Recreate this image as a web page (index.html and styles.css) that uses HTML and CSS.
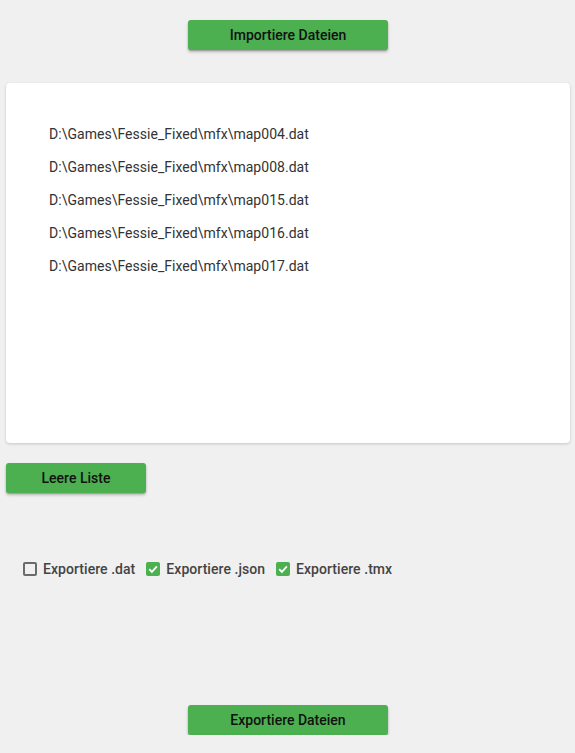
FILE: index.html
```html
<!DOCTYPE html>
<html lang="de">
<head>
<meta charset="utf-8">
<title>Fessie Map Converter</title>
<link rel="stylesheet" href="styles.css">
</head>
<body>
<div class="page">
  <div class="center-row top">
    <button class="btn btn-wide">Importiere Dateien</button>
  </div>
  <div class="card">
    <ul class="file-list">
      <li>D:\Games\Fessie_Fixed\mfx\map004.dat</li>
      <li>D:\Games\Fessie_Fixed\mfx\map008.dat</li>
      <li>D:\Games\Fessie_Fixed\mfx\map015.dat</li>
      <li>D:\Games\Fessie_Fixed\mfx\map016.dat</li>
      <li>D:\Games\Fessie_Fixed\mfx\map017.dat</li>
    </ul>
  </div>
  <div class="left-row">
    <button class="btn btn-small">Leere Liste</button>
  </div>
  <div class="checks">
    <label class="check"><span class="box"></span>Exportiere .dat</label>
    <label class="check"><span class="box checked"><svg viewBox="0 0 14 14" width="14" height="14"><path d="M3.2 7.2 L5.9 9.9 L10.9 4.4" fill="none" stroke="#fff" stroke-width="1.8"/></svg></span>Exportiere .json</label>
    <label class="check"><span class="box checked"><svg viewBox="0 0 14 14" width="14" height="14"><path d="M3.2 7.2 L5.9 9.9 L10.9 4.4" fill="none" stroke="#fff" stroke-width="1.8"/></svg></span>Exportiere .tmx</label>
  </div>
  <div class="center-row bottom">
    <button class="btn btn-wide">Exportiere Dateien</button>
  </div>
</div>
</body>
</html>
```

FILE: styles.css
```css
html, body {
  margin: 0;
  padding: 0;
  background: #f0f0f0;
  font-family: Roboto, "Noto Sans", sans-serif;
}

.page {
  display: flex;
  flex-direction: column;
  padding: 0 5px 0 6px;
}

.center-row {
  display: flex;
  justify-content: center;
}

.center-row.top {
  margin-top: 20px;
}

.center-row.bottom {
  margin-top: 124px;
}

.btn {
  height: 30px;
  border: none;
  border-radius: 3px;
  background: #4caf50;
  color: #111;
  font-family: Roboto, "Noto Sans", sans-serif;
  font-size: 14px;
  font-weight: 500;
  box-shadow: 0 2px 3px rgba(0, 0, 0, 0.25), 0 1px 1px rgba(0, 0, 0, 0.15);
  padding: 0;
  cursor: pointer;
}

.btn-wide {
  width: 200px;
}

.btn-small {
  width: 140px;
}

.card {
  margin-top: 33px;
  height: 360px;
  background: #fff;
  border-radius: 4px;
  box-shadow: 0 1px 3px rgba(0, 0, 0, 0.18);
}

.file-list {
  list-style: none;
  margin: 0;
  padding: 35px 0 0 43px;
}

.file-list li {
  height: 33px;
  line-height: 33px;
  font-size: 14px;
  color: #333;
  letter-spacing: 0.03px;
}

.left-row {
  display: flex;
  margin-top: 20px;
}

.checks {
  display: flex;
  align-items: center;
  gap: 11px;
  margin-top: 64px;
  height: 24px;
  padding-left: 17px;
}

.check {
  display: flex;
  align-items: center;
  gap: 6px;
  font-size: 14px;
  font-weight: 500;
  color: #444;
  letter-spacing: 0.05px;
}

.box {
  width: 14px;
  height: 14px;
  box-sizing: border-box;
  border: 2px solid #6b6b6b;
  border-radius: 2px;
  display: flex;
}

.box.checked {
  border: none;
  background: #4caf50;
}
```
